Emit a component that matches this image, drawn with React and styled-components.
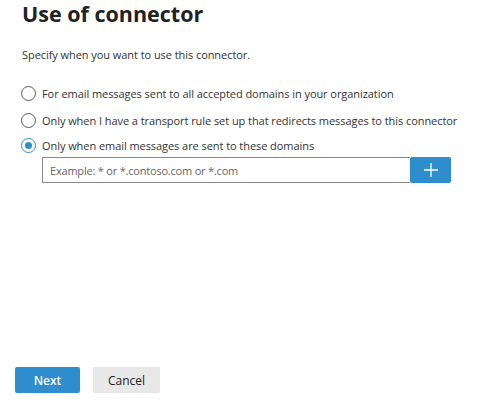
import React from "react";
import styled, { createGlobalStyle } from "styled-components";

const Global = createGlobalStyle`
  html, body { margin: 0; padding: 0; background: #fff; }
  body { font-family: "Open Sans", "Noto Sans", sans-serif; color: #333; }
  * { box-sizing: border-box; }
`;

const Page = styled.div`
  width: 479px;
  height: 401px;
  display: flex;
  flex-direction: column;
  padding: 0 0 0 22px;
  overflow: hidden;
`;

const Title = styled.h1`
  margin: 0;
  font-size: 21.5px;
  line-height: 28px;
  font-weight: 700;
  color: #222;
`;

const Intro = styled.p`
  margin: 19px 0 0;
  font-size: 11px;
  line-height: 16px;
  letter-spacing: -0.06px;
  color: #333;
`;

const Options = styled.div`
  display: flex;
  flex-direction: column;
  margin-top: 16px;
  margin-left: -1px;
`;

const Option = styled.label`
  display: flex;
  align-items: center;
  gap: 6px;
  height: ${(p) => p.$h}px;
  font-size: 11px;
  letter-spacing: -0.06px;
  color: #333;
  white-space: nowrap;
  cursor: pointer;
`;

const Radio = styled.span`
  width: 15px;
  height: 15px;
  border-radius: 50%;
  border: 1px solid #5a5a5a;
  display: flex;
  align-items: center;
  justify-content: center;
  flex: none;
  ${(p) => p.$checked && `border-color: #2d8dcd;`}
  &::after {
    content: "";
    width: 7px;
    height: 7px;
    border-radius: 50%;
    background: ${(p) => (p.$checked ? "#2d8dcd" : "transparent")};
  }
`;

const Field = styled.div`
  display: flex;
  margin-left: 20px;
  margin-top: 0;
  height: 26px;
`;

const Input = styled.input`
  width: 368px;
  height: 26px;
  border: 1px solid #8a8a8a;
  border-right: none;
  padding: 0 7px;
  font-family: inherit;
  font-size: 11px;
  letter-spacing: -0.2px;
  color: #333;
  outline: none;
  &::placeholder { color: #666; }
`;

const AddButton = styled.button`
  width: 41px;
  height: 26px;
  border: none;
  border-radius: 2px;
  background: #2d8dcd;
  display: flex;
  align-items: center;
  justify-content: center;
  padding: 0;
`;

const Spacer = styled.div`
  flex: 1;
`;

const Footer = styled.div`
  display: flex;
  gap: 13px;
  margin-left: -7px;
  margin-bottom: 8px;
`;

const Button = styled.button`
  width: ${(p) => p.$w}px;
  height: 26px;
  border: none;
  border-radius: 2px;
  font-family: inherit;
  font-size: 12px;
  font-weight: ${(p) => (p.$primary ? 600 : 400)};
  background: ${(p) => (p.$primary ? "#2d8dcd" : "#e8e8e8")};
  color: ${(p) => (p.$primary ? "#fff" : "#222")};
`;

export default function App() {
  return (
    <>
      <Global />
      <Page>
        <Title>Use of connector</Title>
        <Intro>Specify when you want to use this connector.</Intro>
        <Options>
          <Option $h={28}>
            <Radio />
            For email messages sent to all accepted domains in your organization
          </Option>
          <Option $h={27}>
            <Radio />
            Only when I have a transport rule set up that redirects messages to this connector
          </Option>
          <Option $h={23}>
            <Radio $checked />
            Only when email messages are sent to these domains
          </Option>
        </Options>
        <Field>
          <Input placeholder="Example: * or *.contoso.com or *.com" />
          <AddButton aria-label="Add">
            <svg width="14" height="14" viewBox="0 0 14 14">
              <path d="M7 0v14M0 7h14" stroke="#fff" strokeWidth="1.3" />
            </svg>
          </AddButton>
        </Field>
        <Spacer />
        <Footer>
          <Button $primary $w={65}>Next</Button>
          <Button $w={67}>Cancel</Button>
        </Footer>
      </Page>
    </>
  );
}
